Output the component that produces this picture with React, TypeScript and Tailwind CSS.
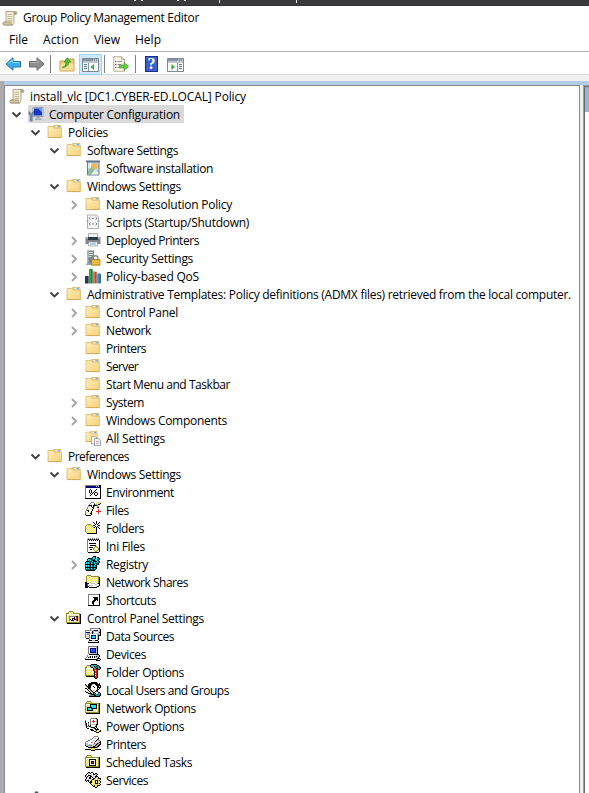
import React, { useLayoutEffect, useRef } from 'react';

const palette: Record<string, string> = {
  K: '#000000', W: '#ffffff', G: '#c0c0c0', g: '#808080', Y: '#efe158', y: '#fffac4',
  B: '#000080', b: '#2050f0', C: '#20e0f0', c: '#008080', R: '#e02020', O: '#8f8f30', t: '#40a0a0', d: '#404040',
};

const pixels: Record<string, string[]> = {
  env: [
    '                ', 'ggggggggggggggKK', 'gBBBBBBBBBBGBGBK', 'gBBBBBBBBBBBBBBK', 'gWWWWWWWWWWWWWWK',
    'gWWWWKWWWWWKWWWK', 'gWWWKWKWWWKWWWWK', 'gWWWKWKWWKWWWWWK', 'gWWWKWKWKWKKWWWK', 'gWWWWKWKWKWWKWWK',
    'gWWWWWKWWKWWKWWK', 'gWWWWKWWWWKKWWWK', 'gWWWWWWWWWWWWWWK', 'gWWWWWWWWWWWWWWK', 'KKKKKKKKKKKKKKKK',
  ],
  files: [
    '      ggg   YYYY', '     gWWWgyYyYYK', '    gWYWWKGGGKK ', '   gKKKWKKKKO   ', '   gWWKWKO WYO  ',
    '  gWYWWKK   KK  ', '  gWWYWWK       ', ' gWYWWWK     R  ', ' gKKWWWK     R  ', 'gWWKWWK    RRRRR',
    'gWYWWYK      R  ', 'gWWYWKK      R  ', 'KWWWWWK         ', ' KKKKK          ',
  ],
  newfolder: [
    '                ', '           K    ', '        K  K  K ', '         K K K  ', '  OOOO    KWK   ',
    ' OyYyYO KKWWWKK ', 'OYyYyYyO  KWK   ', 'OyYyYyYyOK K K  ', 'OYyYyYyYyYyK  K ', 'OyYyYyYyYyYK    ',
    'OYyYyYyYyYyK    ', 'OyYyYyYyYyYK    ', ' OyYyYyYyYyK    ', '  KKKKKKKKKK    ',
  ],
  ini: [
    '   g g g g g g  ', '  gKgKgKgKgKgK  ', '  gWKWKWKWKWKWK ', '  gWWWWWWWWWWWK ', '  gWWWWWWWWWWWK ',
    '  gWKKKKKKKWWWK ', '  gWWWWWWWWWWWK ', '  gWWKKKKKKWWWK ', '  gWWWWWWWOOWWK ', '  gWKKKKWOYYOWK ',
    '  gWWWWWOYWWYOK ', '  gWWKKWOYWWYOK ', '  gWWWWWWOYYOWK ', '  gWWWWWWWOOWWK ', '   KKKKKKKKKKK  ',
  ],
  registry: [
    '        KKK     ', '       KCCK KK  ', '   KKKKcCCKCCcK ', '  KCCcKccKCCccK ', '  cCcCcKKKcCcK  ',
    ' KKKccKCKKKKCcK ', 'KCcCKKCcKCKCccK ', 'cCcCcKCcKCcKcK  ', 'KKKKKKKKKKCcKK  ', 'cCcCcKCcKCcK    ',
    'cCcCcKCcKCcK    ', 'KKKKKKKKKKKK    ', 'cCcCcKCcKCcK    ', 'cccccKccKcK     ', ' KKKKKKKKK      ',
  ],
  shares: [
    '                ', '  OOOO          ', ' OyYyYOOOOOOOO  ', ' OYyYyYyYyYyYOK ', ' OyYyYyYyYyYyOK ',
    ' OYyYyYyYyYyYOK ', ' OyYyYyYyYyYyOK ', ' OYyYyYyYyYyYOK ', 'KKyYyYWWWWyYyOK ', 'BBKKWWGGGGWWOKK ',
    'BBbWWWWWWWGGWWK ', 'BBbWGGGGWWWWWGK ', 'BBBKWWWWWWWGKK  ', 'KKK KKKKKKKK    ',
  ],
  shortcut: [
    '                ', '                ', '   gggggggggggK ', '   gWWWWWWWWWWK ', '   gWWWWWWWWWWK ',
    '   gWWWWKKKKKWK ', '   gWWWWWKKKKWK ', '   gWWWWWKKKKWK ', '   gWWWWKKKWKWK ', '   gWWWKKKWWWWK ',
    '   gWWWKKWWWWWK ', '   gWWWKKWWWWWK ', '   gWWWWKWWWWWK ', '   KKKKKKKKKKKK ',
  ],
  cpanel: [
    '                ', '   OOOO         ', '  OyYyYO        ', 'OOOYyYyOOOOOOO  ', 'OyWWWWWWWWWWWOK ',
    'OWyYyYyYyYyYyOK ', 'OWYgggggggKKYOK ', 'OWygWWWWKWRKyOK ', 'OWYgWWKKKWRKYOK ', 'OWygKWBWKKRKyOK ',
    'OWYgWKBBWWRKYOK ', 'OWyYyYyYyYyYyOK ', 'OOOOOOOOOOOOOOK ', ' KKKKKKKKKKKKKK ',
  ],
  data: [
    '     gggggggggK ', '     gWWWWWWWWGK', 'ggggggGGgBBBBWGK', 'gWWWWWWKGGGGGGGK', 'gBBBBWGKgWWWWGKK',
    'gWGGGGGKGGGGGGGK', 'gGgggWWWWWWWGgGK', 'gWWWgWBBBBBWGKKK', 'gGGGgWBCCCBWGK  ', 'gWWWgWBCCCBWGK  ',
    ' KKKgWBBBBBWGK  ', '    gWWWWWWWGK  ', '    KKKGGGKKK   ', '   gWWWWWWWWWK  ', '   KKKKKKKKKKK  ',
  ],
  devices: [
    '   gggggggggK   ', '   gWWWWWWWGK   ', '   gWBBBBBBGK   ', '   gWBCbbbBGK   ', '   gWBbbbbBGK   ',
    '   gWBbbbbBGK   ', '   gWBBBBBBGK   ', '   gGGGGGGGGK   ', '    KKKKKKKKKK  ', '  gWWWWWWWWGGGK ',
    '  gWGKWKWKGKGGK ', ' gWKGKWKWKGGGK  ', 'gWWWWWWWWWWGKKK ', 'KKKKKKKKKKKKgWGK', '           KKKK ',
  ],
  options: [
    '      KKKKKK    ', '  OOOKtCttttKK  ', ' OyYyKCtCKtKttK ', 'OOyYyYKKCtKtKtKK', 'OWWWWWWWKttKKttK',
    'OyYyYyYyKRRRKKK ', 'OYyYyYyYKRWRK   ', 'OyYyYyYyYKRRK   ', 'OYyYyYyYyKRRK   ', 'OyYyYyYyYKWRK   ',
    'OYyYyYyYyKRRK   ', 'OOOOOOOOOKWRK   ', ' KKKKKKKKKRRK   ', '         KRRK   ', '          KK    ',
  ],
  users: [
    '      KKKKKK    ', '    KKKKKKKKK K ', 'K  KKKKgWWKKKKK ', 'OK KKKgWWWWKKKKK', ' OKKKKWWKWWWKKWK',
    ' yOKKKWWWKWWKKKK', 'KKyKKgWWWWWWKWK ', 'WWKyOKWWWWWWKK  ', 'WWWKyOKWGGWKK   ', 'KGWWKyOKWWKgK   ',
    ' KKGWKyOKKWWWKK ', '   KKKKyKtKWWttK', '     tKKKKttKttK', '    tttttKKtttKK', '    KKKKKKKKKKK ',
  ],
  network: [
    '                ', '  OOOO          ', ' OyYyYO         ', 'OOOOOOOOOOOOOOK ', 'OWWWWKKKKKKKyOK ',
    'OyYyYKCCCCCKYOK ', 'OYyYyKCCCCCKyOK ', 'OyKKKKKCCCCKYOK ', 'OYKCCCKKKKKKyOK ', 'OyKCCCCKGWyYyOK ',
    'OYKKKKKKYyYyYOK ', 'OyYyYyYyYyYyYOK ', 'OOOOOOOOOOOOOOK ', ' KKKKKKKKKKKKKK ',
  ],
  power: [
    '      gggggK    ', '     gWWWWWGK   ', 'g    gWWRWWGK   ', 'K    gWRRRWGK   ', 'K  K gWWRWWGK   ',
    'gK g gWWWWWGK   ', 'gK g gGGGGGKK   ', 'gK K KWWWWGK    ', ' KggKKWWWWKK    ', ' KWWWGKKKKWK    ',
    '  KKWWWWGKKWK   ', '     KKKWWKKKK  ', '      KKKWWKYYyK', '         KKYyYKK', '           KKK  ',
  ],
  printer: [
    '         gggg   ', '        gWWWWg  ', '       gWGGWWK  ', '     ggWWWWWKg  ', '   ggWWWGGWKGGg ',
    ' ggWWWWWWWKGWGGK', 'gWWWWWggGGWWGGKK', 'gGGWWWWWWRGGKgGK', 'gGGGGGGWCGGKgGKK', 'KGGGgggGGGKgGKK ',
    ' KKGGGGGKKgGKK  ', '   KKKKKKKKKO   ', '      OYYO      ', 'KKKKKKYYYYKKKKKK', '      KKKK      ',
  ],
  tasks: [
    '                ', '  OOOO          ', ' OyYyYO         ', 'OOOOOOOOOOOOOOK ', 'OWWWWWWWWWWWyOK ',
    'OyYyKKKKKKKyYOK ', 'OYyYKWWWWWKYyOK ', 'OyYyKWBBBWKyYOK ', 'OYyYKWBRBWKYyOK ', 'OyYyKWBBBWKyYOK ',
    'OYyYKWWWWWKYyOK ', 'OyYyKKKKKKKyYOK ', 'OOOOOOOOOOOOOOK ', ' KKKKKKKKKKKKKK ',
  ],
  services: [
    '   KK KK        ', '  KGGKWWK KK    ', ' KWGWWGWKKGGK   ', 'KGWKKKGWGWGK    ', 'KWKGWKKGWGKKK   ',
    ' KGWKKWKGWKGYK  ', ' KWGKKGWKKYYYKKK', 'KGWGWGWKKYYyYYYK', 'KGKKGWKYYYKKKYK ', ' K KWKKYyYK KYYK',
    '    KKKYYYK KYyK', '     KYYyYKKKYK ', '      KYYYYYYYYK', '       KYKYYKKK ', '        KKYYK   ', '          KK    ',
  ],
};

function PixelIcon({ name }: { name: string }) {
  return (
    <svg className="size-4" viewBox="0 0 16 16" shapeRendering="crispEdges">
      {pixels[name].flatMap((row, y) =>
        [...row].map((p, x) => (p === ' ' ? null : <rect key={`${x}-${y}`} x={x} y={y} width="1" height="1" fill={palette[p]} />)),
      )}
    </svg>
  );
}

function FolderShape() {
  return (
    <>
      <path d="M6.500 1.500h7.500V4H6.500z" fill="#e9cd85" stroke="#cfae5e" strokeWidth=".7" />
      <path d="M8.500 2.200h5v1.600h-5z" fill="#f5f8fb" />
      <path d="M10.500 2.200h2.500v1.200h-2.500z" fill="#5a9fe0" />
      <path d="M1 2.500h5l1.500 1.700h6.900v9.300H1z" fill="url(#folderFill)" stroke="#dcb967" strokeWidth=".8" />
      <path d="M.8 13.600h13.800" stroke="#c9a14c" strokeWidth=".7" />
    </>
  );
}

function Scroll() {
  return (
    <svg className="size-4" viewBox="0 0 16 16">
      <path d="M4 1.500h9.500c1.800 0 1.800 3 .2 3H12v8.700L10.500 15H2.200C.5 15 .7 12 2.300 12H4z" fill="#f3ecd2" stroke="#a99f86" strokeWidth=".9" />
      <path d="M12 1.400c-1.200 1-.8 2.800 0 3h1.800c1.300-.3 1.200-3-.3-3z" fill="#aaa28f" />
      <path d="M2 12h7.400c-.6 1 0 2.800 1.100 3H2.200c-1.500 0-1.600-2.400-.2-3z" fill="#d3c7a0" stroke="#92886d" strokeWidth=".7" />
      <path d="M5.500 4.500h4.700M5.500 6.500h4.700M5.500 8.500h4.700M5.500 10.300h4.700" stroke="#b7ac8b" strokeWidth=".8" />
    </svg>
  );
}

function Icon({ name }: { name: string }) {
  if (pixels[name]) return <PixelIcon name={name} />;
  if (name === 'scroll') return <Scroll />;
  return (
    <svg className="size-4" viewBox="0 0 16 16">
      {name === 'folder' && <FolderShape />}
      {name === 'all' && (
        <>
          <g transform="scale(.86)"><FolderShape /></g>
          <path d="M6.500 6.500h4l1.500 1.500v6H6.500z" fill="#fff" stroke="#999" strokeWidth=".8" />
          <path d="M9.500 8.500h4l2 2v5h-6z" fill="#fff" stroke="#888" strokeWidth=".8" />
          <path d="M11 11.300h3M11 13.300h3" stroke="#888" strokeWidth=".8" />
        </>
      )}
      {name === 'computer' && (
        <>
          <path d="M5 1.500h10v9H5z" fill="#d5dbe1" stroke="#8794a0" strokeWidth=".8" />
          <path d="M6 2.500h8v7H6z" fill="#1636c8" />
          <path d="M10 2.500h4v4z" fill="#6d9af4" />
          <path d="M8.500 11h3v1.500h2v1.400H7v-1.400h1.500z" fill="#a6afb8" />
          <path d="M1 5.500v3l1.200 1V15h2V9.500l1.300-1v-3l-1.300.8v1.500h-2V6.300z" fill="#6e93b8" stroke="#4b6884" strokeWidth=".6" />
        </>
      )}
      {name === 'software' && (
        <>
          <path d="M1 .5h14V2H1z" fill="#586b80" />
          <path d="M2.500 2h11.500v13h-11.500z" fill="#c3d6df" stroke="#667b93" />
          <path d="M3 11l4-5 3 4-4 4.500H3z" fill="#8fbd92" />
          <circle cx="9.500" cy="6" r="3" fill="#f2b65c" />
          <path d="M6 14.500l4-5 3.500 4v1z" fill="#e5edf3" />
          <path d="M3 3h3v5H3z" fill="#dceef6" />
        </>
      )}
      {name === 'scripts' && (
        <>
          <path d="M2.500 1h9l2 2v11.500h-11z" fill="#f8f8f8" stroke="#a4a4a4" strokeWidth=".9" />
          <path d="M5.500 3L4 4.300l1.500 1.400M10.500 3L12 4.300l-1.500 1.400M7 4.400h2M5.500 8.500L4 9.800l1.500 1.400M10.500 8.500L12 9.800l-1.500 1.400M7 9.900h2" fill="none" stroke="#566477" strokeWidth=".9" />
          <path d="M1.500 7h2M12.500 7h2" stroke="#888" strokeWidth=".8" />
        </>
      )}
      {name === 'dprinter' && (
        <>
          <path d="M3.500 1.500h9V6h-9z" fill="#f1f1f1" stroke="#a0a0a0" strokeWidth=".8" />
          <path d="M.5 5h15v7H.5z" fill="#808489" />
          <path d="M.5 5h15v1.500H.5z" fill="#b5b9bd" />
          <path d="M3 5h10v3H3z" fill="#353b40" />
          <path d="M3.500 10h9v4h-9z" fill="#f5faff" stroke="#8d9298" strokeWidth=".7" />
          <path d="M5 12h6" stroke="#5ba2df" />
        </>
      )}
      {name === 'security' && (
        <>
          <path d="M2 .5h7V14H2z" fill="#7a878d" />
          <path d="M2 .5h1.500V14H2z" fill="#abb6bb" />
          <path d="M3.500 2.500h4.500M3.500 4.500h4.500M3.500 6.500h3" stroke="#e4eaec" strokeWidth=".9" />
          <path d="M1 13.500h6V15H1z" fill="#9ca7ac" />
          <path d="M8 10V8c0-3 5-3 5 0v2" fill="none" stroke="#8e8e7c" strokeWidth="1.300" />
          <path d="M6.500 9.500H15v5.700H6.500z" fill="#e2ad28" stroke="#a5780d" strokeWidth=".7" />
          <path d="M7 11.300h7.500M7 13.300h7.500" stroke="#f8d979" strokeWidth=".7" />
        </>
      )}
      {name === 'qos' && (
        <>
          <path d="M0 8h3.500v7.500H0z" fill="#243c54" />
          <path d="M4 .8h3.500v14.700H4z" fill="#31ad3c" />
          <path d="M8 3.500h3.500v12H8z" fill="#ed704d" />
          <path d="M12.200 5.500h3.500v10h-3.500z" fill="#2f90ca" />
          <path d="M3 8.300v7M7 1.300v14M11 4v11M15.200 6v9" stroke="#1c3044" strokeWidth=".8" />
        </>
      )}
    </svg>
  );
}

// Spreads the letters so that each label takes up its intended width.
function Label({ text, w }: { text: string; w: number }) {
  const ref = useRef<HTMLSpanElement>(null);
  useLayoutEffect(() => {
    const el = ref.current;
    if (!el) return;
    el.style.letterSpacing = '0px';
    el.style.letterSpacing = `${(w - 1 - el.getBoundingClientRect().width) / text.length}px`;
  }, [text, w]);
  return <span ref={ref} className="whitespace-pre">{text}</span>;
}

type Row = [level: number, icon: string, text: string, width: number, chevron?: 'open' | 'closed'];

const rows: Row[] = [
  [0, 'computer', 'Computer Configuration', 132, 'open'],
  [1, 'folder', 'Policies', 41, 'open'],
  [2, 'folder', 'Software Settings', 92, 'open'],
  [3, 'software', 'Software installation', 108],
  [2, 'folder', 'Windows Settings', 95, 'open'],
  [3, 'folder', 'Name Resolution Policy', 127, 'closed'],
  [3, 'scripts', 'Scripts (Startup/Shutdown)', 144],
  [3, 'dprinter', 'Deployed Printers', 94, 'closed'],
  [3, 'security', 'Security Settings', 88, 'closed'],
  [3, 'qos', 'Policy-based QoS', 94, 'closed'],
  [2, 'folder', 'Administrative Templates: Policy definitions (ADMX files) retrieved from the local computer.', 485, 'open'],
  [3, 'folder', 'Control Panel', 73, 'closed'],
  [3, 'folder', 'Network', 46, 'closed'],
  [3, 'folder', 'Printers', 41],
  [3, 'folder', 'Server', 33],
  [3, 'folder', 'Start Menu and Taskbar', 125],
  [3, 'folder', 'System', 39, 'closed'],
  [3, 'folder', 'Windows Components', 122, 'closed'],
  [3, 'all', 'All Settings', 60],
  [1, 'folder', 'Preferences', 62, 'open'],
  [2, 'folder', 'Windows Settings', 95, 'open'],
  [3, 'env', 'Environment', 69],
  [3, 'files', 'Files', 24],
  [3, 'newfolder', 'Folders', 39],
  [3, 'ini', 'Ini Files', 40],
  [3, 'registry', 'Registry', 43, 'closed'],
  [3, 'shares', 'Network Shares', 83],
  [3, 'shortcut', 'Shortcuts', 51],
  [2, 'cpanel', 'Control Panel Settings', 118, 'open'],
  [3, 'data', 'Data Sources', 69],
  [3, 'devices', 'Devices', 41],
  [3, 'options', 'Folder Options', 79],
  [3, 'users', 'Local Users and Groups', 124],
  [3, 'network', 'Network Options', 91],
  [3, 'power', 'Power Options', 79],
  [3, 'printer', 'Printers', 41],
  [3, 'tasks', 'Scheduled Tasks', 87],
  [3, 'services', 'Services', 43],
];

const indents = ['pl-[5px]', 'pl-[24px]', 'pl-[43px]', 'pl-[62px]'];

function TreeRow({ row: [level, icon, text, width, chevron] }: { row: Row }) {
  return (
    <div className={`flex h-[18px] shrink-0 items-center ${indents[level]}`}>
      <svg className="mt-0.5 mr-1 h-3.5 w-3.5 shrink-0" viewBox="0 0 14 14" fill="none">
        {chevron === 'open' && <path d="M2.500 4.500L6.500 8.500L10.500 4.500" stroke="#404040" strokeWidth="1.900" />}
        {chevron === 'closed' && <path d="M5 3L9 7L5 11" stroke="#a6a6a6" strokeWidth="1.900" />}
      </svg>
      <div className={`flex h-[18px] items-center gap-[5px] ${level === 0 ? 'w-[156px] bg-[#d9d9d9]' : ''}`}>
        <Icon name={icon} />
        <div className="pt-[2px]"><Label text={text} w={width} /></div>
      </div>
    </div>
  );
}

function Arrow({ back }: { back?: boolean }) {
  return (
    <svg className="h-4 w-[17px]" viewBox="0 0 17 16">
      {back
        ? <path d="M8 1.700L1 8l7 6.300V11h7.500V5.500H8z" fill="#39aee8" stroke="#1d75ab" />
        : <path d="M9 1.700L16 8l-7 6.300V11H1.500V5.500H9z" fill="#8e8e8e" stroke="#696969" />}
      {back ? <path d="M3.500 7.500L7.300 4v2.500h7" fill="none" stroke="#8eddfa" /> : <path d="M2.500 6.500H10V4" fill="none" stroke="#b9b9b9" />}
    </svg>
  );
}

function PanelIcon({ flipped }: { flipped?: boolean }) {
  return (
    <svg className="h-[14px] w-[17px]" viewBox="0 0 17 14">
      <path d="M.5 .5h16v13H.5z" fill="#fbfbfb" stroke="#7d8896" />
      <path d="M1 1h15v2.500H1z" fill="#8290a0" />
      <path d="M11 2h1M13 2h1M15 2h1" stroke="#fff" />
      <path d="M1 4.500h15" stroke="#c0c8d0" />
      {flipped ? (
        <>
          <path d="M10.500 5v8" stroke="#8794a3" />
          <path d="M12 6.500h3M12 8.500h3M12 10.500h3" stroke="#577da9" />
          <path d="M4.500 6L8 9l-3.500 3z" fill="#39a835" />
        </>
      ) : (
        <>
          <path d="M6.500 5v8" stroke="#8794a3" />
          <path d="M2 6.500h3M2 8.500h3M2 10.500h3" stroke="#577da9" />
          <path d="M12 6L8.500 9l3.500 3z" fill="#39a835" />
        </>
      )}
    </svg>
  );
}

function Separator() {
  return <div className="h-[18px] w-px bg-[#808080]" />;
}

export default function App() {
  return (
    <div className="flex h-[793px] w-[589px] flex-col overflow-hidden bg-white font-['Open_Sans','Noto_Sans',sans-serif] text-[12px] leading-[18px] text-black">
      <svg width="0" height="0" className="absolute">
        <linearGradient id="folderFill" x1="0" y1="0" x2="1" y2="1">
          <stop offset="0" stopColor="#ffecb4" />
          <stop offset="1" stopColor="#f5d37e" />
        </linearGradient>
      </svg>
      <div className="h-1.5 shrink-0 border-b border-[#303032] bg-[#3b3b3d]">
        <svg className="block h-[5px] w-full" viewBox="0 0 589 5" shapeRendering="crispEdges">
          <path d="M134 0h2v1h-2zM141 0h2v1h-2zM177 0h2v1h-2zM184 0h2v1h-2zM219 0h1v3h-1zM296 0h1v3h-1z" fill="#e5e5e5" />
        </svg>
      </div>
      <div className="flex h-6 shrink-0 items-center gap-[5px] pl-0.5">
        <Scroll />
        <Label text="Group Policy Management Editor" w={177} />
      </div>
      <div className="flex h-[22px] shrink-0 items-center border-b border-[#adb0b5] pb-px pl-[9px]">
        <div className="w-[34px]"><Label text="File" w={20} /></div>
        <div className="w-[51px]"><Label text="Action" w={37} /></div>
        <div className="w-[41px]"><Label text="View" w={27} /></div>
        <Label text="Help" w={27} />
      </div>
      <div className="flex h-[23px] shrink-0 items-center border-b border-[#d9d9d9] pt-[2px] pl-[5px]">
        <Arrow back />
        <div className="mr-[5px] ml-[6px] h-4"><Arrow /></div>
        <Separator />
        <svg className="mr-[4px] ml-[8px] h-4 w-4" viewBox="0 0 16 16">
          <path d="M1 5h5l1.500-2H15v12H1z" fill="#edca70" stroke="#b78c38" strokeWidth=".8" />
          <path d="M1.500 7.500h13v7h-13z" fill="#f8de98" />
          <path d="M3 11.500c3-.8 4-3 4-5.500H5L8.500 1.800 12 6h-2.200c0 3.500-2.800 5.500-6.800 5.500z" fill="#55bd38" stroke="#27891d" strokeWidth=".6" />
        </svg>
        <div className="flex h-[21px] w-[23px] items-center justify-center border border-[#99d1ff] bg-[#cce8ff] pt-[2px]"><PanelIcon /></div>
        <div className="ml-[2px]"><Separator /></div>
        <svg className="mr-[6px] ml-[8px] h-4 w-4" viewBox="0 0 16 16">
          <path d="M.8.700h7.700l3 3v11.600H.8z" fill="#fbf8e9" stroke="#a59c7d" strokeWidth=".8" />
          <path d="M8.500.7v3h3" fill="none" stroke="#a59c7d" strokeWidth=".8" />
          <path d="M2.300 5.500h1M2.300 8.500h1M2.300 11.500h1" stroke="#333" />
          <path d="M4.500 5.500H9M4.500 8.500H8M4.500 11.500H8" stroke="#888fb0" />
          <path d="M6.500 9H11V6.500l4.800 4L11 14.500V12H6.500z" fill="#65c943" stroke="#36972a" strokeWidth=".6" />
        </svg>
        <Separator />
        <div className="ml-[9px] flex h-4 w-[13px] items-center justify-center border border-[#1b2f85] bg-[#3b5fcf] font-['Liberation_Serif'] text-[16px] font-bold text-white">?</div>
        <div className="mt-[2px] ml-[9px] h-[14px]"><PanelIcon flipped /></div>
      </div>
      <div className="h-1.5 shrink-0 bg-[#f0f0f0]" />
      <div className="flex min-h-0 flex-1 bg-[#f0f0f0]">
        <div className="w-1 shrink-0 bg-[#ababab]" />
        <div className="flex min-w-0 flex-1 flex-col">
          <div className="h-1 shrink-0 bg-[#b4cde6]" />
          <div className="flex min-h-0 flex-1">
            <div className="flex w-[576px] shrink-0 flex-col overflow-hidden border-x border-t border-[#828790] bg-white pt-px">
              <div className="flex h-[18px] shrink-0 items-center gap-[5px] pl-[4px]">
                <Scroll />
                <div className="pt-[2px]"><Label text="install_vlc [DC1.CYBER-ED.LOCAL] Policy" w={217} /></div>
              </div>
              {rows.map((row, i) => <TreeRow key={i} row={row} />)}
              <svg className="mt-0.5 ml-[29px] h-2 w-2 shrink-0" viewBox="0 0 8 8">
                <path d="M0 3c1-3.600 4-3.600 5 0" fill="#555" />
              </svg>
            </div>
            <div className="w-[3px] shrink-0" />
            <div className="flex flex-1 flex-col border-t border-l border-[#a0a0a0]">
              <div className="flex flex-1 flex-col border-t border-l border-[#696969] bg-white">
                <div className="h-[25px] bg-[#95b3d7]" />
              </div>
            </div>
          </div>
        </div>
      </div>
    </div>
  );
}
